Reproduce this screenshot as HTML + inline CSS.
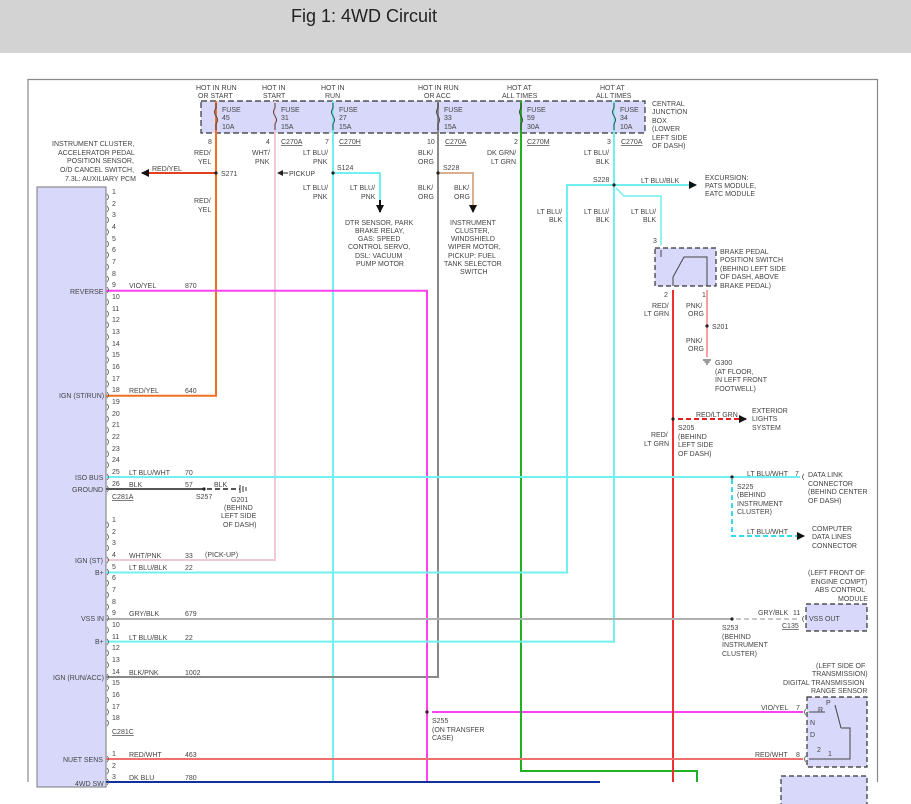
<!DOCTYPE html>
<html><head><meta charset="utf-8"><style>
body{margin:0;width:911px;height:804px;overflow:hidden;background:#fff}
.hd{position:absolute;left:0;top:0;width:911px;height:53px;background:#d3d3d3}
.hd span{position:absolute;left:291px;top:6px;font:18px "Liberation Sans",sans-serif;color:#222}
svg{position:absolute;left:0;top:0}
text{font-family:"Liberation Sans",sans-serif;font-size:7px;fill:#444}
</style></head><body>
<div class="hd"><span>Fig 1: 4WD Circuit</span></div>
<svg width="911" height="804" viewBox="0 0 911 804">
<defs><marker id="ar" markerWidth="8" markerHeight="8" refX="7" refY="4" orient="auto" markerUnits="userSpaceOnUse"><path d="M0,0L8,4L0,8z" fill="#111"/></marker></defs>
<path d="M28,782V79.5H877.5V782" fill="none" stroke="#888" stroke-width="1.2"/>
<rect x="201" y="101" width="444" height="32" fill="#d8d8fa" stroke="#333" stroke-dasharray="6,3" stroke-width="1.2"/>
<rect x="37" y="187" width="69" height="600" fill="#d8d8fa" stroke="#777"/>
<g fill="none" stroke-width="2">
<path d="M216,101V395.7H106" stroke="#f07020"/>
<path d="M216,173H142" stroke="#e04020" marker-end="url(#ar)"/>
<path d="M275,101V560H106" stroke="#f0c8d8"/>
<path d="M333,101V782" stroke="#70f0f0"/>
<path d="M333,173H380V210" stroke="#70f0f0"/><path d="M380,200V212" stroke="#111" marker-end="url(#ar)"/>
<path d="M438,101V677H106" stroke="#888"/>
<path d="M438,173H473V212" stroke="#d8b090" marker-end="url(#ar)"/>
<path d="M106,290.7H427V782" stroke="#ff40f0"/>
<path d="M432,712H803" stroke="#ff40f0"/>
<path d="M521,101V771H697V782" stroke="#20b020"/>
<path d="M614,101V641.6H106" stroke="#70f0f0"/>
<path d="M614,185H567V572.5H106" stroke="#70f0f0"/>
<path d="M614,185H696" stroke="#70f0f0" marker-end="url(#ar)"/>
<path d="M616,188L624,196H661V245" stroke="#70f0f0" stroke-width="1.5"/>
<path d="M673,290V782" stroke="#f03030"/>
<path d="M707,290V357" stroke="#f8a0a0"/>
<path d="M678,419H746" stroke="#e02020" stroke-dasharray="5,3" marker-end="url(#ar)"/>
<path d="M106,477H800" stroke="#70f0f0"/>
<path d="M732,479V536H804" stroke="#30e0f0" stroke-dasharray="5,3" marker-end="url(#ar)"/>
<path d="M106,619H732" stroke="#b0b0b0"/>
<path d="M736,619H800" stroke="#c8c8c8" stroke-dasharray="5,3"/>
<path d="M106,759H803" stroke="#f07070"/>
<path d="M106,782H600" stroke="#1030a0"/>
<path d="M106,489H204" stroke="#555"/>
<path d="M207,489H240" stroke="#555" stroke-dasharray="5,3"/>
</g>
<g fill="#222"><circle cx="216" cy="173" r="1.6"/><circle cx="333" cy="173" r="1.6"/><circle cx="438" cy="173" r="1.6"/><circle cx="614" cy="185" r="1.6"/><circle cx="707" cy="326" r="1.6"/><circle cx="673" cy="419" r="1.6"/><circle cx="732" cy="477" r="1.6"/><circle cx="732" cy="619" r="1.6"/><circle cx="427" cy="712" r="1.6"/><circle cx="204" cy="489" r="1.6"/></g>
<path d="M240,485V493M243,486V492M246,487V491" stroke="#333"/>
<path d="M703,360H711M704.5,362H709.5M706,364H708" stroke="#333"/>
<path d="M282,173H288" stroke="#222"/><path d="M277,173L283,170V176z" fill="#222"/>
<rect x="655" y="248" width="61" height="38" fill="#d8d8fa" stroke="#333" stroke-dasharray="5,3" stroke-width="1.2"/>
<path d="M661,250V257M673,286V277L684,257H707V286" fill="none" stroke="#444"/>
<rect x="806" y="604" width="61" height="27" fill="#d8d8fa" stroke="#333" stroke-dasharray="5,3" stroke-width="1.2"/>
<rect x="807" y="697" width="60" height="70" fill="#d8d8fa" stroke="#333" stroke-dasharray="5,3" stroke-width="1.2"/>
<path d="M809,712H825M841,728L850,728V759H809M835,705L841,728" fill="none" stroke="#444"/>
<rect x="781" y="776" width="86" height="30" fill="#d8d8fa" stroke="#333" stroke-dasharray="5,3" stroke-width="1.2"/>
<g fill="none" stroke="#444"><path d="M216,103v5q-3,4 0,8q3,4 0,8v6M275,103v5q-3,4 0,8q3,4 0,8v6M333,103v5q-3,4 0,8q3,4 0,8v6M438,103v5q-3,4 0,8q3,4 0,8v6M521,103v5q-3,4 0,8q3,4 0,8v6M614,103v5q-3,4 0,8q3,4 0,8v6"/></g>
<g>
<text x="196" y="90">HOT IN RUN</text><text x="198" y="98">OR START</text>
<text x="262" y="90">HOT IN</text><text x="263" y="98">START</text>
<text x="321" y="90">HOT IN</text><text x="325" y="98">RUN</text>
<text x="418" y="90">HOT IN RUN</text><text x="424" y="98">OR ACC</text>
<text x="507" y="90">HOT AT</text><text x="502" y="98">ALL TIMES</text>
<text x="600" y="90">HOT AT</text><text x="596" y="98">ALL TIMES</text>
<text x="222" y="112">FUSE</text><text x="222" y="120">45</text><text x="222" y="129">10A</text>
<text x="281" y="112">FUSE</text><text x="281" y="120">31</text><text x="281" y="129">15A</text>
<text x="339" y="112">FUSE</text><text x="339" y="120">27</text><text x="339" y="129">15A</text>
<text x="444" y="112">FUSE</text><text x="444" y="120">33</text><text x="444" y="129">15A</text>
<text x="527" y="112">FUSE</text><text x="527" y="120">59</text><text x="527" y="129">30A</text>
<text x="620" y="112">FUSE</text><text x="620" y="120">34</text><text x="620" y="129">10A</text>
<text x="652" y="106">CENTRAL</text><text x="652" y="114">JUNCTION</text><text x="652" y="123">BOX</text><text x="652" y="131">(LOWER</text><text x="652" y="140">LEFT SIDE</text><text x="652" y="148">OF DASH)</text>
<text x="208" y="144">8</text><text x="266" y="144">4</text><text x="325" y="144">7</text><text x="427" y="144">10</text><text x="514" y="144">2</text><text x="607" y="144">3</text>
<text x="281" y="144" text-decoration="underline">C270A</text><text x="339" y="144" text-decoration="underline">C270H</text><text x="445" y="144" text-decoration="underline">C270A</text><text x="527" y="144" text-decoration="underline">C270M</text><text x="621" y="144" text-decoration="underline">C270A</text>
<text x="52" y="146">INSTRUMENT CLUSTER,</text><text x="58" y="155">ACCELERATOR PEDAL</text><text x="67" y="163">POSITION SENSOR,</text><text x="60" y="172">O/D CANCEL SWITCH,</text><text x="65" y="181">7.3L: AUXILIARY PCM</text>
<text x="152" y="171">RED/YEL</text><text x="221" y="176">S271</text><text x="289" y="176">PICKUP</text><text x="337" y="170">S124</text><text x="443" y="170">S228</text><text x="593" y="182">S228</text>
<text x="194" y="155">RED/</text><text x="198" y="164">YEL</text><text x="194" y="203">RED/</text><text x="198" y="212">YEL</text>
<text x="252" y="155">WHT/</text><text x="255" y="164">PNK</text>
<text x="303" y="155">LT BLU/</text><text x="313" y="164">PNK</text><text x="303" y="190">LT BLU/</text><text x="313" y="199">PNK</text>
<text x="350" y="190">LT BLU/</text><text x="361" y="199">PNK</text>
<text x="418" y="155">BLK/</text><text x="418" y="164">ORG</text><text x="418" y="190">BLK/</text><text x="418" y="199">ORG</text>
<text x="454" y="190">BLK/</text><text x="454" y="199">ORG</text>
<text x="487" y="155">DK GRN/</text><text x="491" y="164">LT GRN</text>
<text x="584" y="155">LT BLU/</text><text x="596" y="164">BLK</text>
<text x="641" y="183">LT BLU/BLK</text>
<text x="705" y="180">EXCURSION:</text><text x="705" y="188">PATS MODULE,</text><text x="705" y="196">EATC MODULE</text>
<text x="537" y="214">LT BLU/</text><text x="549" y="222">BLK</text><text x="584" y="214">LT BLU/</text><text x="596" y="222">BLK</text><text x="631" y="214">LT BLU/</text><text x="643" y="222">BLK</text>
<text x="345" y="225">DTR SENSOR, PARK</text><text x="355" y="233">BRAKE RELAY,</text><text x="358" y="241">GAS: SPEED</text><text x="348" y="249">CONTROL SERVO,</text><text x="355" y="258">DSL: VACUUM</text><text x="356" y="266">PUMP MOTOR</text>
<text x="450" y="225">INSTRUMENT</text><text x="455" y="233">CLUSTER,</text><text x="451" y="241">WINDSHIELD</text><text x="448" y="249">WIPER MOTOR,</text><text x="448" y="258">PICKUP: FUEL</text><text x="444" y="266">TANK SELECTOR</text><text x="460" y="274">SWITCH</text>
<text x="653" y="243">3</text>
<text x="720" y="254">BRAKE PEDAL</text><text x="720" y="262">POSITION SWITCH</text><text x="720" y="271">(BEHIND LEFT SIDE</text><text x="720" y="279">OF DASH, ABOVE</text><text x="720" y="288">BRAKE PEDAL)</text>
<text x="664" y="297">2</text><text x="702" y="297">1</text>
<text x="652" y="308">RED/</text><text x="644" y="316">LT GRN</text><text x="686" y="308">PNK/</text><text x="688" y="316">ORG</text>
<text x="712" y="329">S201</text><text x="686" y="343">PNK/</text><text x="688" y="351">ORG</text>
<text x="715" y="365">G300</text><text x="715" y="374">(AT FLOOR,</text><text x="715" y="382">IN LEFT FRONT</text><text x="715" y="391">FOOTWELL)</text>
<text x="696" y="417">RED/LT GRN</text><text x="752" y="413">EXTERIOR</text><text x="752" y="421">LIGHTS</text><text x="752" y="430">SYSTEM</text>
<text x="678" y="430">S205</text><text x="678" y="439">(BEHIND</text><text x="678" y="447">LEFT SIDE</text><text x="678" y="456">OF DASH)</text>
<text x="651" y="437">RED/</text><text x="644" y="446">LT GRN</text>
<text x="747" y="476">LT BLU/WHT</text><text x="795" y="476">7</text>
<text x="808" y="477">DATA LINK</text><text x="808" y="486">CONNECTOR</text><text x="808" y="494">(BEHIND CENTER</text><text x="808" y="503">OF DASH)</text>
<text x="737" y="489">S225</text><text x="737" y="497">(BEHIND</text><text x="737" y="506">INSTRUMENT</text><text x="737" y="514">CLUSTER)</text>
<text x="747" y="534">LT BLU/WHT</text><text x="812" y="531">COMPUTER</text><text x="812" y="539">DATA LINES</text><text x="812" y="548">CONNECTOR</text>
<text x="808" y="575">(LEFT FRONT OF</text><text x="811" y="584">ENGINE COMPT)</text><text x="815" y="592">ABS CONTROL</text><text x="838" y="601">MODULE</text>
<text x="758" y="615">GRY/BLK</text><text x="793" y="615">11</text><text x="782" y="628" text-decoration="underline">C135</text><text x="809" y="621">VSS OUT</text>
<text x="722" y="630">S253</text><text x="722" y="639">(BEHIND</text><text x="722" y="647">INSTRUMENT</text><text x="722" y="656">CLUSTER)</text>
<text x="816" y="668">(LEFT SIDE OF</text><text x="812" y="676">TRANSMISSION)</text><text x="783" y="685">DIGITAL TRANSMISSION</text><text x="811" y="693">RANGE SENSOR</text>
<text x="761" y="710">VIO/YEL</text><text x="796" y="710">7</text><text x="755" y="757">RED/WHT</text><text x="796" y="757">8</text>
<text x="826" y="705">P</text><text x="818" y="712">R</text><text x="810" y="725">N</text><text x="810" y="737">D</text><text x="817" y="752">2</text><text x="828" y="756">1</text>
<text x="432" y="723">S255</text><text x="432" y="732">(ON TRANSFER</text><text x="432" y="740">CASE)</text>
<text x="70" y="294">REVERSE</text><text x="59" y="398">IGN (ST/RUN)</text><text x="75" y="480">ISO BUS</text><text x="72" y="492">GROUND</text>
<text x="75" y="563">IGN (ST)</text><text x="95" y="575">B+</text><text x="81" y="621">VSS IN</text><text x="95" y="644">B+</text><text x="53" y="680">IGN (RUN/ACC)</text><text x="63" y="762">NUET SENS</text><text x="75" y="786">4WD SW</text>
<text x="129" y="288">VIO/YEL</text><text x="185" y="288">870</text>
<text x="129" y="393">RED/YEL</text><text x="185" y="393">640</text>
<text x="129" y="475">LT BLU/WHT</text><text x="185" y="475">70</text>
<text x="129" y="487">BLK</text><text x="185" y="487">57</text><text x="214" y="487">BLK</text>
<text x="112" y="499" text-decoration="underline">C281A</text><text x="196" y="499">S257</text>
<text x="231" y="502">G201</text><text x="224" y="510">(BEHIND</text><text x="221" y="518">LEFT SIDE</text><text x="223" y="527">OF DASH)</text>
<text x="129" y="558">WHT/PNK</text><text x="185" y="558">33</text><text x="205" y="557">(PICK-UP)</text>
<text x="129" y="570">LT BLU/BLK</text><text x="185" y="570">22</text>
<text x="129" y="616">GRY/BLK</text><text x="185" y="616">679</text>
<text x="129" y="640">LT BLU/BLK</text><text x="185" y="640">22</text>
<text x="129" y="675">BLK/PNK</text><text x="185" y="675">1002</text>
<text x="112" y="734" text-decoration="underline">C281C</text>
<text x="129" y="757">RED/WHT</text><text x="185" y="757">463</text>
<text x="129" y="780">DK BLU</text><text x="185" y="780">780</text>
</g>
<g>
<text x="112" y="194">1</text><text x="112" y="206">2</text><text x="112" y="217">3</text><text x="112" y="229">4</text><text x="112" y="241">5</text><text x="112" y="252">6</text><text x="112" y="264">7</text><text x="112" y="276">8</text><text x="112" y="287">9</text><text x="112" y="299">10</text><text x="112" y="311">11</text><text x="112" y="322">12</text><text x="112" y="334">13</text><text x="112" y="346">14</text><text x="112" y="357">15</text><text x="112" y="369">16</text><text x="112" y="381">17</text><text x="112" y="392">18</text><text x="112" y="404">19</text><text x="112" y="416">20</text><text x="112" y="427">21</text><text x="112" y="439">22</text><text x="112" y="451">23</text><text x="112" y="462">24</text><text x="112" y="474">25</text><text x="112" y="486">26</text>
<text x="112" y="522">1</text><text x="112" y="534">2</text><text x="112" y="545">3</text><text x="112" y="557">4</text><text x="112" y="569">5</text><text x="112" y="580">6</text><text x="112" y="592">7</text><text x="112" y="604">8</text><text x="112" y="615">9</text><text x="112" y="627">10</text><text x="112" y="639">11</text><text x="112" y="650">12</text><text x="112" y="662">13</text><text x="112" y="674">14</text><text x="112" y="685">15</text><text x="112" y="697">16</text><text x="112" y="709">17</text><text x="112" y="720">18</text>
<text x="112" y="756">1</text><text x="112" y="768">2</text><text x="112" y="779">3</text>
</g>
<g fill="none" stroke="#555" stroke-width="0.8">
<path d="M107,194q3,3 0,6M107,206q3,3 0,6M107,217q3,3 0,6M107,229q3,3 0,6M107,241q3,3 0,6M107,252q3,3 0,6M107,264q3,3 0,6M107,276q3,3 0,6M107,287q3,3 0,6M107,299q3,3 0,6M107,311q3,3 0,6M107,322q3,3 0,6M107,334q3,3 0,6M107,346q3,3 0,6M107,357q3,3 0,6M107,369q3,3 0,6M107,381q3,3 0,6M107,392q3,3 0,6M107,404q3,3 0,6M107,416q3,3 0,6M107,427q3,3 0,6M107,439q3,3 0,6M107,451q3,3 0,6M107,462q3,3 0,6M107,474q3,3 0,6M107,486q3,3 0,6"/>
<path d="M107,522q3,3 0,6M107,534q3,3 0,6M107,545q3,3 0,6M107,557q3,3 0,6M107,569q3,3 0,6M107,580q3,3 0,6M107,592q3,3 0,6M107,604q3,3 0,6M107,615q3,3 0,6M107,627q3,3 0,6M107,639q3,3 0,6M107,650q3,3 0,6M107,662q3,3 0,6M107,674q3,3 0,6M107,685q3,3 0,6M107,697q3,3 0,6M107,709q3,3 0,6M107,720q3,3 0,6M107,756q3,3 0,6M107,768q3,3 0,6M107,779q3,3 0,6"/>
<path d="M804,474q-3,3 0,6M804,616q-3,3 0,6M806,709q-3,3 0,6M806,756q-3,3 0,6"/>
</g>
</svg>
</body></html>
